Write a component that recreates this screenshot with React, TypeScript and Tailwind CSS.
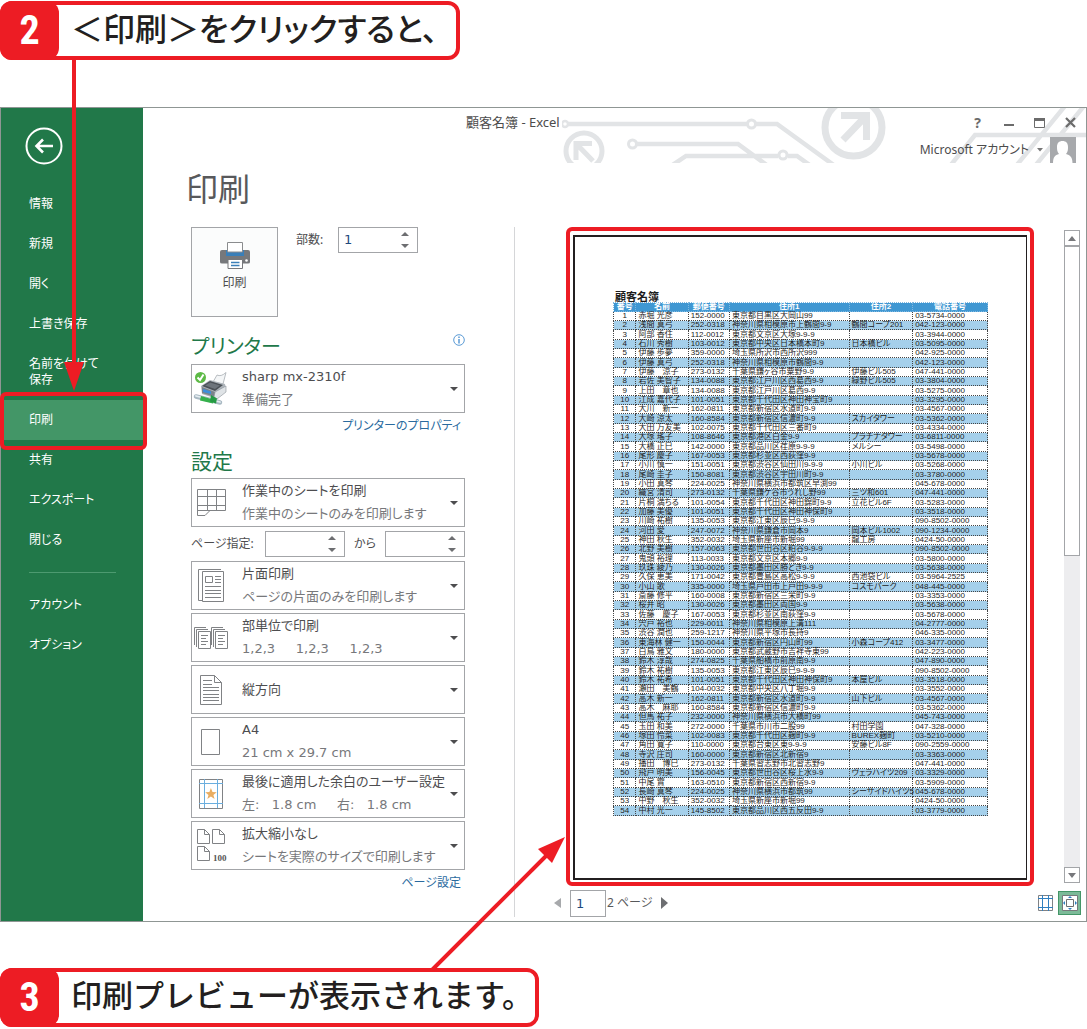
import React from "react";

type Customer = [string, string, string, string, string];

const customers: Customer[] = [
  ["赤堀 光彦", "152-0000", "東京都目黒区大岡山99", "", "03-5734-0000"],
  ["浅間 真弓", "252-0318", "神奈川県相模原市上鶴間9-9", "鶴間コープ201", "042-123-0000"],
  ["阿部 香住", "112-0012", "東京都文京区大塚9-9-9", "", "03-3944-0000"],
  ["石川 秀樹", "103-0012", "東京都中央区日本橋本町9", "日本橋ビル", "03-5095-0000"],
  ["伊藤 歩夢", "359-0000", "埼玉県所沢市西所沢999", "", "042-925-0000"],
  ["伊藤 真弓", "252-0318", "神奈川県相模原市鶴間9-9", "", "042-123-0000"],
  ["伊藤　涼子", "273-0132", "千葉県鎌ヶ谷市粟野9-9", "伊藤ビル505", "047-441-0000"],
  ["岩佐 美智子", "134-0088", "東京都江戸川区西葛西9-9", "緑野ビル505", "03-3804-0000"],
  ["上田　章也", "134-0088", "東京都江戸川区葛西9-9", "", "03-5275-0000"],
  ["江成 嘉代子", "101-0051", "東京都千代田区神田神宝町9", "", "03-3295-0000"],
  ["大川　新一", "162-0811", "東京都新宿区水道町9-9", "", "03-4567-0000"],
  ["大崎 涼太", "160-8584", "東京都新宿区信濃町9-9", "スカイタワー", "03-5362-0000"],
  ["大田 万友美", "102-0075", "東京都千代田区三番町9", "", "03-4334-0000"],
  ["大塚 瑤子", "108-8646", "東京都港区白金9-9", "プラチナタワー", "03-6811-0000"],
  ["大橋 正巳", "142-0000", "東京都品川区荏原9-9-9", "メルシー", "03-5498-0000"],
  ["尾形 慶子", "167-0053", "東京都杉並区西荻窪9-9", "", "03-5678-0000"],
  ["小川 慎一", "151-0051", "東京都渋谷区仙田川9-9-9", "小川ビル", "03-5268-0000"],
  ["尾崎 圭子", "150-8081", "東京都渋谷区宇田川町9-9", "", "03-3780-0000"],
  ["小田 真琴", "224-0025", "神奈川県横浜市都筑区早渕99", "", "045-678-0000"],
  ["織宮 清司", "273-0132", "千葉県鎌ケ谷市うれし野99", "三ツ和601", "047-441-0000"],
  ["片桐 満ちる", "101-0054", "東京都千代田区神田錦町9-9", "立花ビル6F", "03-5283-0000"],
  ["加藤 美優", "101-0051", "東京都千代田区神田神保町9", "", "03-3518-0000"],
  ["川崎 祐樹", "135-0053", "東京都江東区辰巳9-9-9", "", "090-8502-0000"],
  ["河田 愛", "247-0072", "神奈川県鎌倉市岡本9", "岡本ビル1002", "090-1234-0000"],
  ["神田 秋生", "352-0032", "埼玉県新座市新堀99", "龍工房", "0424-50-0000"],
  ["北野 美樹", "157-0063", "東京都世田谷区粕谷9-9-9", "", "090-8502-0000"],
  ["鬼頭 裕理", "113-0033", "東京都文京区本郷9-9", "", "03-5800-0000"],
  ["玖珠 綾乃", "130-0026", "東京都墨田区勝どき9-9", "", "03-5638-0000"],
  ["久保 恵美", "171-0042", "東京都豊島区高松9-9-9", "西池袋ビル", "03-5964-2525"],
  ["小山 歌", "335-0000", "埼玉県戸田市上戸田9-9-9", "コスモパーク", "048-445-0000"],
  ["斎藤 修平", "160-0008", "東京都新宿区三栄町9-9", "", "03-3353-0000"],
  ["桜井 昭", "130-0026", "東京都墨田区両国9-9", "", "03-5638-0000"],
  ["佐藤　慶子", "167-0053", "東京都杉並区南荻窪9-9", "", "03-5678-0000"],
  ["宍戸 裕也", "229-0011", "神奈川県相模原上溝111", "", "04-2777-0000"],
  ["渋谷 潤也", "259-1217", "神奈川県平塚市長持9", "", "046-335-0000"],
  ["東海林 健一", "150-0044", "東京都新宿区円山町99", "小森コープ412", "03-3477-0000"],
  ["白鳥 雅文", "180-0000", "東京都武蔵野市吉祥寺東99", "", "042-223-0000"],
  ["鈴木 淳哉", "274-0825", "千葉県船橋市前原南9-9", "", "047-890-0000"],
  ["鈴木 祐樹", "135-0053", "東京都江東区辰巳9-9-9", "", "090-8502-0000"],
  ["鈴木 祐希", "101-0051", "東京都千代田区神田神保町9", "本屋ビル", "03-3518-0000"],
  ["瀬田　美鶴", "104-0032", "東京都中央区八丁堀9-9", "", "03-3552-0000"],
  ["高木 新一", "162-0811", "東京都新宿区水道町9-9", "山下ビル", "03-4567-0000"],
  ["高木　麻耶", "160-8584", "東京都新宿区信濃町9-9", "", "03-5362-0000"],
  ["但馬 祐子", "232-0000", "神奈川県横浜市大橋町99", "", "045-743-0000"],
  ["玉田 和美", "272-0000", "千葉県市川市二股99", "村田学園", "047-328-0000"],
  ["塚田 怜菜", "102-0083", "東京都千代田区麹町9-9", "BUREX麹町", "03-5210-0000"],
  ["角田 寛子", "110-0000", "東京都台東区東9-9-9", "安藤ビル8F", "090-2559-0000"],
  ["寺沢 庄司", "160-0000", "東京都新宿区北新宿9", "", "03-3363-0000"],
  ["播田　博巳", "273-0132", "千葉県習志野市北習志野9", "", "047-441-0000"],
  ["飛戸 明美", "156-0045", "東京都世田谷区桜上水9-9", "ヴェラハイツ209", "03-3329-0000"],
  ["中尾 實", "163-0510", "東京都新宿区西新宿9-9", "", "03-5909-0000"],
  ["長崎 真琴", "224-0025", "神奈川県横浜市都筑99", "シーサイドハイツ5", "045-678-0000"],
  ["中野　秋生", "352-0032", "埼玉県新座市新堀99", "", "0424-50-0000"],
  ["中村 光一", "145-8502", "東京都品川区西五反田9-9", "", "03-3779-0000"],
];

function Callout({ n, children, className }: { n: string; children: React.ReactNode; className: string }) {
  return (
    <div className={`flex h-[59px] w-fit items-center rounded-xl border-4 border-[#ed1c24] bg-white ${className}`}>
      <span className="-my-1 -ml-1 flex h-[59px] w-[59px] shrink-0 items-center justify-center rounded-xl bg-[#ed1c24] font-['Liberation_Sans_Narrow','Roboto_Condensed','Open_Sans',sans-serif] text-[40px] font-bold leading-none text-white">
        {n}
      </span>
      <p className="whitespace-nowrap pb-1 pl-3 font-medium leading-none text-[#231f20]">{children}</p>
    </div>
  );
}

/* ---------- sidebar ---------- */

function NavItem({ children, active, tall }: { children: React.ReactNode; active?: boolean; tall?: boolean }) {
  return (
    <li className={`relative ${tall ? "h-14" : "h-10"} ${active ? "bg-[#439667]" : ""}`}>
      <a href="#" className="flex h-full items-center pl-7 text-xs leading-4 text-white">
        <span>{children}</span>
      </a>
      {active && (
        <span className="pointer-events-none absolute -bottom-[10px] -left-px -right-1 -top-2 z-10 rounded-md border-4 border-[#ed1c24]" />
      )}
    </li>
  );
}

function Sidebar() {
  return (
    <nav className="w-[142px] shrink-0 bg-[#217849] pb-4" aria-label="ファイル">
      <button aria-label="戻る" className="ml-6 mt-[19px] block">
        <svg width="38" height="38" viewBox="0 0 38 38" fill="none" stroke="#fff">
          <circle cx="19" cy="19" r="17.5" strokeWidth="2" />
          <path d="M28 19H12M18 12.500l-6.500 6.500 6.500 6.500" strokeWidth="2.600" />
        </svg>
      </button>
      <ul className="mt-[19px]">
        <NavItem>情報</NavItem>
        <NavItem>新規</NavItem>
        <NavItem>開く</NavItem>
        <NavItem>上書き保存</NavItem>
        <NavItem tall>
          名前を付けて
          <br />
          保存
        </NavItem>
        <NavItem active>印刷</NavItem>
        <NavItem>共有</NavItem>
        <NavItem>エクスポート</NavItem>
        <NavItem>閉じる</NavItem>
      </ul>
      <hr className="ml-7 mr-[27px] mt-3 border-[#4d9a70]" />
      <ul className="mt-3">
        <NavItem>アカウント</NavItem>
        <NavItem>オプション</NavItem>
      </ul>
    </nav>
  );
}

/* ---------- title area ---------- */

function Circuit() {
  return (
    <svg className="pointer-events-none absolute right-0 top-0" width="524" height="55" viewBox="562 108 524 55" fill="none" stroke="#e2e4e6" strokeWidth="4.500">
      <circle cx="565" cy="124" r="3" strokeWidth="2.500" />
      <path d="M568 124H747M756 124H777L835 166" />
      <circle cx="751.500" cy="124" r="4" strokeWidth="3" />
      <circle cx="632.500" cy="144" r="4" strokeWidth="3" />
      <path d="M637 144H738L768 166M671 166L686 156H778M788 156H797L811 166" />
      <circle cx="783" cy="155" r="4" strokeWidth="3" />
      <circle cx="584" cy="151" r="18" strokeWidth="5" />
      <path d="M592 143.500H576V160M577 144.500L593 161" strokeWidth="5" />
      <circle cx="853.500" cy="127.500" r="28.500" strokeWidth="7" />
      <path d="M841 115.500H866.500V140M866 116L843 140" strokeWidth="7" />
      <path d="M950 166L975 135H1086M1016 166L1065 106M1035 166L1084 106" />
    </svg>
  );
}

function TitleArea() {
  const ctl = "flex h-5 w-[31px] items-center justify-center";
  return (
    <header className="relative h-[119px]">
      <Circuit />
      <div className="relative flex h-[29px] items-center">
        <p className="ml-[323px] text-[13px] text-[#4c4c4c]">顧客名簿 - Excel</p>
        <div className="ml-auto flex">
          <button aria-label="ヘルプ" className={ctl}>
            <span className="text-sm font-bold text-[#6b6b6b]">?</span>
          </button>
          <button aria-label="最小化" className={ctl}>
            <svg width="10" height="10"><path d="M0 7H10" stroke="#6b6b6b" strokeWidth="2" /></svg>
          </button>
          <button aria-label="最大化" className={ctl}>
            <svg width="11" height="10" fill="none" stroke="#6b6b6b"><path d="M.5 1V9.500H10.500V1" /><path d="M0 1.500H11" strokeWidth="3" /></svg>
          </button>
          <button aria-label="閉じる" className={ctl}>
            <svg width="11" height="11"><path d="M1 1L10 10M10 1L1 10" stroke="#6b6b6b" strokeWidth="2.200" /></svg>
          </button>
        </div>
      </div>
      <div className="relative flex h-[26px] items-center justify-end pr-[10px]">
        <button className="flex items-center gap-2 text-xs text-[#4c4c4c]">
          <span>Microsoft アカウント</span>
          <svg width="6" height="4"><path d="M0 0H6L3 3.500Z" fill="#777" /></svg>
        </button>
        <svg className="ml-[7px]" width="26" height="26" viewBox="0 0 26 26">
          <rect width="26" height="26" fill="#a7a9ac" />
          <path d="M3 26C3 20 5 18 9 17C7 15 7 12 7 10C7 6 9 4 12.500 4S18 6 18 10C18 12 18 15 16 17C20 18 22.500 20 22.500 26Z" fill="#fff" />
        </svg>
      </div>
      <h1 className="ml-[43px] mt-[10px] text-[32px] leading-8 text-[#58595b]">印刷</h1>
    </header>
  );
}

/* ---------- icons ---------- */

const PrintIcon = () => (
  <svg width="30" height="27" viewBox="0 0 30 27">
    <path d="M2 8H28Q30 8 30 10V20Q30 21.500 28 21.500H2Q0 21.500 0 20V10Q0 8 2 8Z" fill="#76787b" />
    <path d="M6 8H24V14H6Z" fill="#3a7fb8" />
    <path d="M7.500 .5H22.500V10H7.500Z" fill="#fff" stroke="#8a8c8e" />
    <path d="M8 17.500H22.500V26.500H8Z" fill="#fff" stroke="#76787b" />
    <path d="M11 20.500H19.500M11 23.500H19.500" stroke="#3a7fb8" strokeWidth="1.300" />
    <circle cx="26.500" cy="18.500" r="1.300" fill="#fff" />
  </svg>
);

const iconProps = { width: 50, height: 47, viewBox: "0 0 50 47", fill: "none", stroke: "#808285", className: "shrink-0" };

const DeviceIcon = () => (
  <svg {...iconProps} stroke="none">
    <path d="M21 17L25 10Q29 12 34 7.500L31 19Z" fill="#f4f6f7" stroke="#a7adb2" strokeWidth=".8" />
    <path d="M9 21L18 15L33 19L34 25L25 34L10 29Z" fill="#aeb4ba" />
    <path d="M10 21L18 16L31 20L23 26Z" fill="#4b5157" />
    <path d="M13 20.500L18 17.500L28 20.500L23 24Z" fill="#6d747b" />
    <path d="M10 22L23 27V32L10 28Z" fill="#7b838b" />
    <path d="M11 24L19 26.500V29L11 27Z" fill="#3c8fdc" />
    <path d="M23 27L34 21V27L25 34L22 32Z" fill="#dfe3e6" stroke="#8b9298" strokeWidth=".6" />
    <path d="M4 31.500L28 37.500" stroke="#a9b9c3" strokeWidth="4.500" strokeLinecap="round" />
    <path d="M4 31L28 37" stroke="#e6eef2" strokeWidth="1.800" strokeLinecap="round" />
    <path d="M9 31L21 34.500V38.500L8 35.500Z" fill="#35b04c" />
    <path d="M19 30L25 33.500L24 38.500L18 36.500Z" fill="#259a44" />
    <circle cx="8.500" cy="12.500" r="5.500" fill="#5dba46" />
    <path d="M5.500 12.500L8 15L11.500 9.500" fill="none" stroke="#fff" strokeWidth="2" />
  </svg>
);

const SheetIcon = () => (
  <svg {...iconProps}>
    <path d="M5.500 10.500H33.500V31.500H5.500ZM5.500 17.500H33.500M5.500 26.500H33.500M15.500 10V31M24.500 10V31" />
    <path d="M5.500 31V36.500H13L18.500 31" />
  </svg>
);

const OneSideIcon = () => (
  <svg {...iconProps}>
    <path d="M10 38.500H6.500V7.500H29" />
    <path d="M10.500 9.500H31.500V39.500H10.500ZM13.500 14.500H20.500V20.500H13.500Z" />
    <path d="M23 14.500H29M23 17.500H29M23 20.500H29M13 24.500H29M13 28.500H29M13 31.500H29M13 35.500H29" />
  </svg>
);

const CollateIcon = () => (
  <svg {...iconProps}>
    {[0, 17].map((dx) => (
      <g key={dx} transform={`translate(${dx} 0)`}>
        <path d="M2.500 31V13.500H14M4.500 33V15.500H16" />
        <path d="M6.500 17.500H18.500V34.500H6.500ZM9 21.500H16M9 24.500H14M9 27.500H16M9 30.500H14" />
      </g>
    ))}
  </svg>
);

const PortraitIcon = () => (
  <svg {...iconProps}>
    <path d="M8.500 9.500H22.500L29.500 16.500V38.500H8.500ZM22.500 9.500V16.500H29.500" />
    <path d="M11 14.500H20M11 18.500H20M11 21.500H27M11 24.500H27M11 28.500H27M11 31.500H27M11 34.500H27" />
  </svg>
);

const PaperIcon = () => (
  <svg {...iconProps}>
    <path d="M9.500 11.500H27.500V36.500H9.500Z" />
  </svg>
);

const MarginIcon = () => (
  <svg {...iconProps}>
    <path d="M7.500 9.500H30.500V38.500H7.500Z" />
    <path d="M12.500 9V38M25.500 9V38M7 13.500H31M7 33.500H31" stroke="#6aaede" />
    <path d="M18.900 18l1.600 4 4.200.2-3.300 2.700 1.200 4.100-3.700-2.400-3.600 2.400 1.200-4.100-3.300-2.700 4.200-.2z" fill="#e9ae63" stroke="none" />
  </svg>
);

const ScaleIcon = () => (
  <svg {...iconProps}>
    {["translate(5.5 7.5)", "translate(20.5 7.5)", "translate(5.5 24.5)"].map((t) => (
      <path key={t} transform={t} d="M0 0H7L12 5V14H0ZM7 0V5H12" />
    ))}
    <text x="21" y="39" fontSize="9" fontWeight="700" fontFamily="Liberation Serif, serif" fill="#555" stroke="none">100</text>
  </svg>
);

/* ---------- form parts ---------- */

function Spin({ label, value, className }: { label: string; value?: string; className: string }) {
  return (
    <span className={`flex h-[26px] border border-[#a3a5a8] bg-white ${className}`}>
      <input
        type="number"
        aria-label={label}
        defaultValue={value}
        className="w-0 min-w-0 flex-1 bg-transparent pl-[5px] font-['DejaVu_Sans',sans-serif] text-[13px] text-[#1f497d] outline-none [appearance:textfield] [&::-webkit-inner-spin-button]:appearance-none"
      />
      <span className="flex w-4 flex-col justify-between py-1">
        <button aria-label={`${label} 増やす`}>
          <svg className="block" width="8" height="4"><path d="M0 4L4 0L8 4Z" fill="#6d6e71" /></svg>
        </button>
        <button aria-label={`${label} 減らす`}>
          <svg className="block" width="8" height="4"><path d="M0 0H8L4 4Z" fill="#6d6e71" /></svg>
        </button>
      </span>
    </span>
  );
}

function Choice({ icon, label, value, note }: { icon: React.ReactNode; label: string; value: string; note?: string }) {
  return (
    <div className="relative flex h-[49px] items-center border border-[#a3a5a8] bg-white pb-px">
      {icon}
      <div className="min-w-0 flex-1 font-['DejaVu_Sans','Noto_Sans_CJK_JP',sans-serif] text-[13px] leading-[23px]">
        <select aria-label={label} className="block h-[23px] w-full appearance-none bg-transparent text-[#4d4d4f] outline-none">
          <option>{value}</option>
        </select>
        {note && <p className="whitespace-pre text-[#77787b]">{note}</p>}
      </div>
      <svg className="pointer-events-none absolute right-[6px] top-[22px]" width="8" height="4"><path d="M0 0H8L4 4Z" fill="#4d4d4f" /></svg>
    </div>
  );
}

function Settings() {
  return (
    <section className="w-[274px] shrink-0">
      <div className="flex items-start">
        <button className="flex h-[90px] w-[87px] flex-col items-center gap-[6px] border border-[#a3a5a8] bg-[#fbfcfc] pt-[14px] text-xs text-[#4d4d4f]">
          <PrintIcon />
          印刷
        </button>
        <span className="ml-[18px] w-[42px] text-xs leading-[26px] text-[#4d4d4f]">部数:</span>
        <Spin label="部数" value="1" className="w-20" />
      </div>

      <div className="mt-[14px] flex h-[33px] items-start justify-between">
        <h2 className="text-[20px] leading-8 text-[#217849]">プリンター</h2>
        <button aria-label="プリンターの情報" className="mt-[3px]">
          <svg className="block" width="12" height="12" fill="none" stroke="#5b9bd5"><circle cx="6" cy="6" r="5.300" /><path d="M6 5V9.500M6 2.500V4" strokeWidth="1.500" /></svg>
        </button>
      </div>
      <Choice icon={<DeviceIcon />} label="プリンター" value="sharp mx-2310f" note="準備完了" />
      <p className="pr-1 text-right text-xs leading-[26px]">
        <a href="#" className="text-[#2a6a9e]">プリンターのプロパティ</a>
      </p>

      <h2 className="mt-[7px] h-8 text-[21px] leading-[30px] text-[#217849]">設定</h2>
      <div className="flex flex-col gap-[3px]">
        <Choice icon={<SheetIcon />} label="印刷対象" value="作業中のシートを印刷" note="作業中のシートのみを印刷します" />
        <div className="flex h-7 items-center text-xs text-[#4d4d4f]">
          <span className="w-[74px]">ページ指定:</span>
          <Spin label="開始ページ" className="w-20" />
          <span className="flex-1 text-center">から</span>
          <Spin label="終了ページ" className="w-20" />
        </div>
        <Choice icon={<OneSideIcon />} label="印刷面" value="片面印刷" note="ページの片面のみを印刷します" />
        <Choice icon={<CollateIcon />} label="部単位" value="部単位で印刷" note="1,2,3     1,2,3     1,2,3" />
        <Choice icon={<PortraitIcon />} label="用紙の向き" value="縦方向" />
        <Choice icon={<PaperIcon />} label="用紙サイズ" value="A4" note="21 cm x 29.7 cm" />
        <Choice icon={<MarginIcon />} label="余白" value="最後に適用した余白のユーザー設定" note="左:   1.8 cm     右:   1.8 cm" />
        <Choice icon={<ScaleIcon />} label="拡大縮小" value="拡大縮小なし" note="シートを実際のサイズで印刷します" />
      </div>
      <p className="pr-1 text-right text-xs leading-[26px]">
        <a href="#" className="text-[#2a6a9e]">ページ設定</a>
      </p>
    </section>
  );
}

/* ---------- preview ---------- */

function CustomerTable() {
  const cell = "whitespace-nowrap border border-dotted border-[#444] p-0 pl-[2px]";
  return (
    <table className="w-full table-fixed border-collapse font-['Liberation_Sans','Noto_Sans_CJK_JP',sans-serif] text-[8px] leading-[8px] text-[#1c1c1c]">
      <caption className="h-[11px] pl-[2px] text-left font-['Noto_Sans_CJK_JP',sans-serif] text-[11px] font-bold leading-[11px]">顧客名簿</caption>
      <colgroup>
        <col className="w-[6%]" />
        <col className="w-[14%]" />
        <col className="w-[11%]" />
        <col className="w-[32%]" />
        <col className="w-[17%]" />
        <col className="w-[20%]" />
      </colgroup>
      <thead>
        <tr className="h-[9px] bg-[#3f97d2] text-white">
          {["番号", "名前", "郵便番号", "住所1", "住所2", "電話番号"].map((h) => (
            <th key={h} className="whitespace-nowrap border border-dotted border-[#7fb8e0] p-0 text-center font-bold">{h}</th>
          ))}
        </tr>
      </thead>
      <tbody>
        {customers.map((c, i) => (
          <tr key={i} className="h-[9px] even:bg-[#a5d0eb] nth-[3n]:h-[10px]">
            <td className={`${cell} pr-[2px] text-center`}>{i + 1}</td>
            {c.map((v, j) => (
              <td key={j} className={cell}>{v}</td>
            ))}
          </tr>
        ))}
      </tbody>
    </table>
  );
}

function Preview() {
  const box = "flex h-4 w-4 items-center justify-center border border-[#a3a5a8] bg-white";
  return (
    <section className="mb-1 ml-[49px] flex min-w-0 flex-1 flex-col border-l border-[#d5d6d8]">
      <div className="flex items-start pl-[51px] pr-[6px]">
        <div className="h-[659px] min-w-0 flex-1 rounded-md border-4 border-[#ed1c24] px-[3px] pb-[2px] pt-1">
          <div className="h-full border-2 border-r-1 border-[#231f20] bg-white pl-[38px] pr-[38px] pt-[54px]">
            <CustomerTable />
          </div>
        </div>
        <div className="ml-[30px] mt-[3px] flex h-[653px] w-4 flex-col bg-[#ededef]">
          <button aria-label="上へスクロール" className={box}>
            <svg width="8" height="5"><path d="M0 5L4 0L8 5Z" fill="#77787b" /></svg>
          </button>
          <div className="h-[310px] border border-[#a3a5a8] bg-white" />
          <button aria-label="下へスクロール" className={`${box} mt-auto`}>
            <svg width="8" height="5"><path d="M0 0H8L4 5Z" fill="#77787b" /></svg>
          </button>
        </div>
      </div>
      <div className="mt-[3px] flex h-7 items-center pl-[39px] pr-[5px]">
        <button aria-label="前のページ">
          <svg className="block" width="7" height="10"><path d="M7 0V10L0 5Z" fill="#a7a9ac" /></svg>
        </button>
        <input aria-label="ページ番号" defaultValue="1" className="ml-[9px] h-[27px] w-9 border border-[#a3a5a8] pl-[5px] font-['DejaVu_Sans',sans-serif] text-[13px] text-[#1f497d] outline-none" />
        <span className="ml-px text-xs text-[#58595b]">2 ページ</span>
        <button aria-label="次のページ" className="ml-2">
          <svg className="block" width="7" height="12"><path d="M0 0V12L7 6Z" fill="#6d6e71" /></svg>
        </button>
        <button aria-label="余白の表示" className="ml-auto">
          <svg className="block" width="15" height="16" fill="none"><path d="M.5 .5H14.500V15.500H.5Z" stroke="#808285" /><path d="M4.500 0V16M10.500 0V16M0 3.500H15M0 12.500H15" stroke="#2f7fc0" /></svg>
        </button>
        <button aria-label="ページに合わせる" className="ml-[5px] flex h-6 w-[23px] items-center justify-center border border-[#439667] bg-[#7cba98]">
          <svg width="16" height="16" fill="none">
            <path d="M.5 .5H15.500V15.500H.5Z" fill="#fff" stroke="#77787b" />
            <path d="M4.500 4.500H11.500V11.500H4.500Z" stroke="#6d6e71" />
            <path d="M8 1L10 3H6ZM8 15L10 13H6ZM1 8L3 6V10ZM15 8L13 6V10Z" fill="#2f7fc0" />
          </svg>
        </button>
      </div>
    </section>
  );
}

export default function App() {
  return (
    <div className="relative overflow-hidden bg-white pt-px font-['Noto_Sans','Noto_Sans_CJK_JP',sans-serif]">
      <Callout n="2" className="pr-[18px] text-[32px] [font-feature-settings:'palt']">＜印刷＞をクリックすると、</Callout>

      <div className="mt-[47px] flex border border-[#8f9694] [font-feature-settings:'palt']">
        <Sidebar />
        <main className="flex min-w-0 flex-1 flex-col bg-white">
          <TitleArea />
          <div className="flex flex-1 pl-12">
            <Settings />
            <Preview />
          </div>
        </main>
      </div>

      <Callout n="3" className="mt-[46px] pr-[2px] text-[31px]">印刷プレビューが表示されます。</Callout>

      <svg className="pointer-events-none absolute left-16 top-[59px] z-20" width="20" height="333" viewBox="0 0 20 333">
        <path d="M10 0V310" stroke="#ed1c24" strokeWidth="4" />
        <path d="M0 303H20L10 332Z" fill="#ed1c24" />
      </svg>
      <svg className="pointer-events-none absolute left-[428px] top-[836px] z-20" width="140" height="135" viewBox="428 836 140 135">
        <path d="M431 971L549 853" stroke="#ed1c24" strokeWidth="4" />
        <path d="M565 837L538 849L552 863Z" fill="#ed1c24" />
      </svg>
    </div>
  );
}
